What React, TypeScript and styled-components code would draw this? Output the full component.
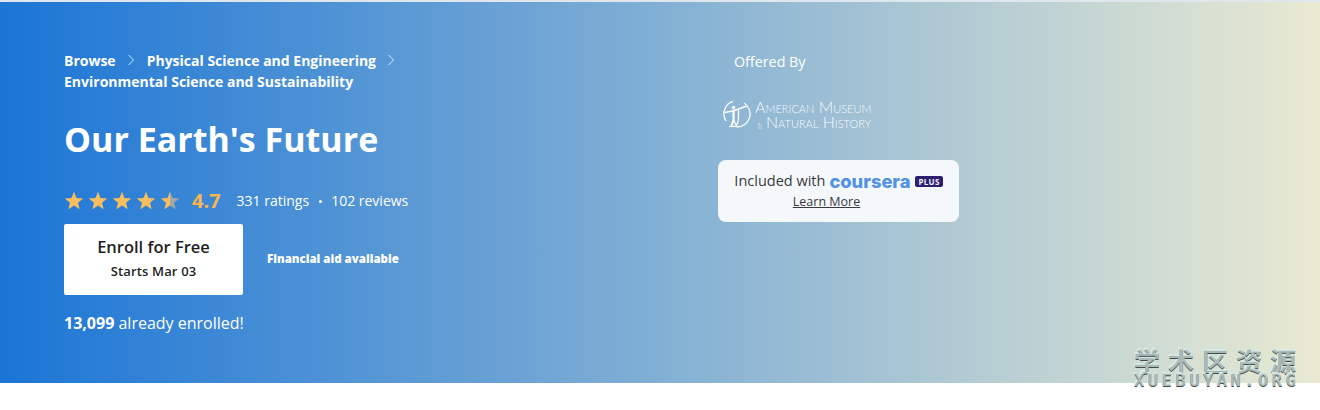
import React from 'react'
import styled, { createGlobalStyle } from 'styled-components'

const GlobalStyle = createGlobalStyle`
  html, body {
    margin: 0;
    padding: 0;
    background: #fff;
  }
  * {
    box-sizing: border-box;
  }
`

const Page = styled.div`
  position: relative;
  width: 1320px;
  height: 410px;
  overflow: hidden;
  font-family: 'Open Sans', 'Noto Sans', sans-serif;
  border-top: 2px solid #dfe6ee;
`

const Banner = styled.section`
  display: grid;
  grid-template-columns: 654px 241px;
  height: 381px;
  padding: 48px 0 0 64px;
  color: #fff;
  background: linear-gradient(90deg, #1b75d6 0%, #e9ead2 100%);
`

const Left = styled.div`
  display: flex;
  flex-direction: column;
`

const Crumbs = styled.nav`
  display: flex;
  flex-wrap: wrap;
  width: 420px;
  font-size: 14px;
  font-weight: 700;
  line-height: 21px;
`

const Crumb = styled.span`
  white-space: nowrap;
`

const Chevron = styled.svg`
  width: 8px;
  height: 12px;
  margin: 4px 12px 0 11px;
  fill: none;
  stroke: rgba(255, 255, 255, 0.8);
  stroke-width: 1;
`

const Title = styled.h1`
  margin: 24px 0 0;
  font-size: 34px;
  font-weight: 700;
  line-height: 46px;
`

const RatingRow = styled.div`
  display: flex;
  align-items: center;
  height: 24px;
  margin-top: 26px;
`

const Stars = styled.div`
  display: flex;
  gap: 4px;
`

const Star = styled.svg`
  display: block;
  width: 20px;
  height: 19px;
`

const Score = styled.span`
  margin-left: 12px;
  font-size: 20px;
  font-weight: 700;
  color: #f9b64f;
`

const RatingText = styled.span`
  margin-left: 16px;
  font-size: 14px;
`

const Dot = styled.span`
  display: inline-block;
  width: 3px;
  height: 3px;
  margin: 0 9.5px 3px 9.5px;
  border-radius: 50%;
  background: #fff;
`

const EnrollRow = styled.div`
  display: flex;
  align-items: center;
  margin-top: 12px;
`

const EnrollButton = styled.button`
  display: flex;
  flex-direction: column;
  align-items: center;
  width: 179px;
  height: 71px;
  padding: 12px 0 0;
  border: 0;
  border-radius: 2px;
  background: #fff;
  color: #1f1f1f;
  font-family: inherit;
`

const EnrollLabel = styled.span`
  font-size: 16.5px;
  font-weight: 600;
  line-height: 22px;
`

const EnrollDate = styled.span`
  margin-top: 4px;
  font-size: 13px;
  font-weight: 600;
  line-height: 18px;
  letter-spacing: 0.15px;
`

const Aid = styled.span`
  margin: 0 0 3px 24px;
  font-size: 11.5px;
  font-weight: 800;
`

const Enrolled = styled.p`
  margin: 17px 0 0;
  font-size: 16px;
  line-height: 22px;

  b {
    font-weight: 700;
  }
`

const Right = styled.aside`
  display: flex;
  flex-direction: column;
  padding-top: 1px;
`

const OfferedBy = styled.div`
  padding-left: 16px;
  font-size: 14.3px;
  font-weight: 500;
  line-height: 21px;
`

const Partner = styled.div`
  display: flex;
  align-items: center;
  gap: 4px;
  height: 32px;
  margin: 26px 0 0 5px;
`

const PartnerMark = styled.svg`
  flex: none;
  width: 28px;
  height: 28px;
  fill: none;
  stroke: rgba(255, 255, 255, 0.95);
`

const PartnerName = styled.div`
  font-family: 'Lato', 'Liberation Sans', sans-serif;
  font-size: 16px;
  font-weight: 300;
  line-height: 15px;
  white-space: nowrap;
  color: rgba(255, 255, 255, 0.95);
  font-variant: small-caps;
`

const Of = styled.span`
  display: inline-block;
  width: 8px;
  margin-right: 3px;
  font-size: 7px;
  line-height: 7px;
  transform: rotate(-90deg);
`

const PlusCard = styled.div`
  display: flex;
  flex-direction: column;
  align-items: center;
  height: 62px;
  margin-top: 30px;
  padding-top: 11px;
  border-radius: 8px;
  background: #f5f8fb;
  color: #373a3f;
`

const PlusRow = styled.div`
  display: flex;
  align-items: center;
  font-size: 14.5px;
  line-height: 20px;
`

const Brand = styled.span`
  margin-left: 4px;
  font-family: 'Inter', 'Liberation Sans', sans-serif;
  font-size: 18.3px;
  font-weight: 800;
  line-height: 20px;
  color: #5291e4;
`

const PlusBadge = styled.span`
  margin-left: 5px;
  padding: 0 3px;
  border-radius: 2px;
  background: #2d1f70;
  color: #f2f0fa;
  font-size: 8px;
  font-weight: 700;
  line-height: 11px;
  letter-spacing: 0.3px;
`

const LearnMore = styled.a`
  margin: 2px 24px 0 0;
  font-size: 12.5px;
  line-height: 17px;
  text-decoration: underline;
  color: #373a3f;
`

const Watermark = styled.div`
  position: absolute;
  top: 344px;
  left: 1134px;
  width: 162px;
  color: rgba(205, 222, 218, 0.75);
  text-shadow: 0 1px 0 #434c4a, -1px -1px 0 #d8ebe8;
  font-family: 'Noto Sans CJK SC', 'DejaVu Sans', sans-serif;
`

const WatermarkCn = styled.div`
  display: flex;
  justify-content: space-between;
  font-size: 26px;
  font-weight: 700;
  line-height: 27px;
`

const WatermarkEn = styled.div`
  display: flex;
  justify-content: space-between;
  font-family: 'DejaVu Sans Mono', 'Liberation Mono', monospace;
  font-size: 17px;
  font-weight: 700;
  line-height: 15px;
`

const StarIcon = ({ id, fill = 1 }: { id: string; fill?: number }) => (
  <Star viewBox="0 0 20 19">
    <defs>
      <linearGradient id={id}>
        <stop offset={fill} stopColor="#f9bd5d" />
        <stop offset={fill} stopColor="#a3a9a6" />
      </linearGradient>
    </defs>
    <path
      fill={`url(#${id})`}
      d="M10 0.8l2.5 6.2 6.7.4-5.2 4.3 1.7 6.5L10 14.6l-5.7 3.6 1.7-6.5L.8 7.4l6.7-.4z"
    />
  </Star>
)

const ChevronIcon = () => (
  <Chevron viewBox="0 0 8 12">
    <path d="M1.5 1l5 5-5 5" />
  </Chevron>
)

const watermarkCn = ['学', '术', '区', '资', '源']
const watermarkEn = 'XUEBUYAN.ORG'.split('')

export default function App() {
  return (
    <Page>
      <GlobalStyle />
      <Banner>
        <Left>
          <Crumbs>
            <Crumb>Browse</Crumb>
            <ChevronIcon />
            <Crumb>Physical Science and Engineering</Crumb>
            <ChevronIcon />
            <Crumb>Environmental Science and Sustainability</Crumb>
          </Crumbs>
          <Title>Our Earth's Future</Title>
          <RatingRow>
            <Stars>
              {[1, 2, 3, 4].map((n) => (
                <StarIcon key={n} id={`star-${n}`} />
              ))}
              <StarIcon id="star-5" fill={0.5} />
            </Stars>
            <Score>4.7</Score>
            <RatingText>
              331 ratings
              <Dot />
              102 reviews
            </RatingText>
          </RatingRow>
          <EnrollRow>
            <EnrollButton>
              <EnrollLabel>Enroll for Free</EnrollLabel>
              <EnrollDate>Starts Mar 03</EnrollDate>
            </EnrollButton>
            <Aid>Financial aid available</Aid>
          </EnrollRow>
          <Enrolled>
            <b>13,099</b> already enrolled!
          </Enrolled>
        </Left>
        <Right>
          <OfferedBy>Offered By</OfferedBy>
          <Partner>
            <PartnerMark viewBox="0 0 28 28">
              <path strokeWidth="1.3" d="M10 1.4A13 13 0 0 0 3 21" />
              <path strokeWidth="1.3" d="M21 3A13 13 0 0 1 14 27" />
              <path strokeWidth="1.6" d="M1.5 12.5c4-.5 8-1.5 11-2.5s7-2 11-4" />
              <path strokeWidth="2.2" d="M10.5 11v9l-2 6" />
              <path strokeWidth="1.3" d="M10.5 20l3 6M15.5 9v9c0 4-1 6-2.5 8" />
              <path strokeWidth="1.2" d="M6 26.5h9" />
              <circle cx="10.5" cy="7.5" r="1.8" fill="#fff" stroke="none" />
            </PartnerMark>
            <PartnerName>
              <div>American Museum</div>
              <div>
                <Of>of</Of>Natural History
              </div>
            </PartnerName>
          </Partner>
          <PlusCard>
            <PlusRow>
              Included with
              <Brand>coursera</Brand>
              <PlusBadge>PLUS</PlusBadge>
            </PlusRow>
            <LearnMore>Learn More</LearnMore>
          </PlusCard>
        </Right>
      </Banner>
      <Watermark>
        <WatermarkCn>
          {watermarkCn.map((c) => (
            <span key={c}>{c}</span>
          ))}
        </WatermarkCn>
        <WatermarkEn>
          {watermarkEn.map((c, i) => (
            <span key={i}>{c}</span>
          ))}
        </WatermarkEn>
      </Watermark>
    </Page>
  )
}
